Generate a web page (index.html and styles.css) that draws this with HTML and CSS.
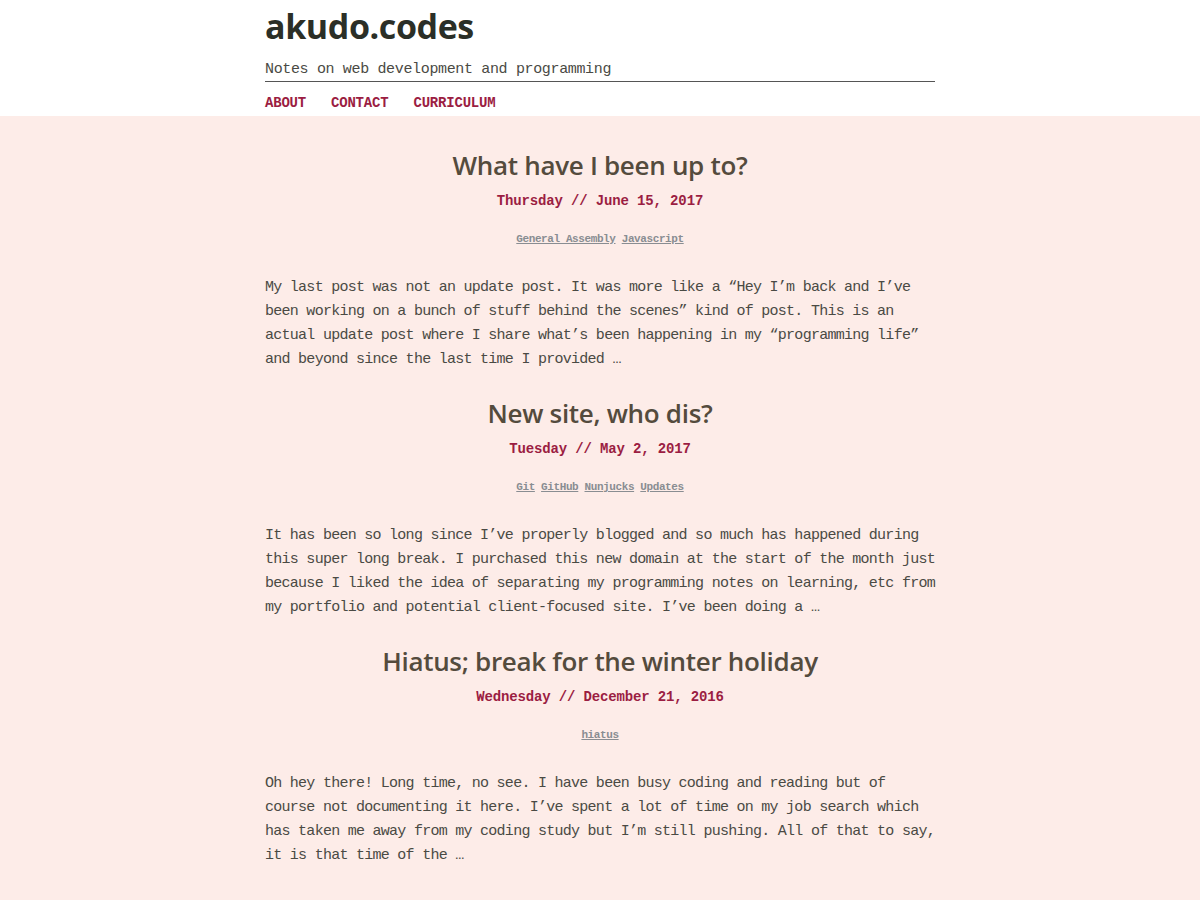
FILE: index.html
```html
<!DOCTYPE html>
<html lang="en">
<head>
<meta charset="utf-8">
<title>akudo.codes</title>
<link rel="stylesheet" href="styles.css">
</head>
<body>
<header class="site-header">
  <div class="wrap">
    <h1 class="site-title">akudo.codes</h1>
    <p class="tagline">Notes on web development and programming</p>
    <nav class="nav">
      <a href="#">ABOUT</a>
      <a href="#">CONTACT</a>
      <a href="#">CURRICULUM</a>
    </nav>
  </div>
</header>
<main class="content">
  <div class="wrap">
    <article class="post">
      <h2 class="post-title">What have I been up to?</h2>
      <p class="post-date">Thursday // June 15, 2017</p>
      <p class="tags"><a href="#">General Assembly</a> <a href="#">Javascript</a></p>
      <p class="excerpt">My last post was not an update post. It was more like a “Hey I’m back and I’ve been working on a bunch of stuff behind the scenes” kind of post. This is an actual update post where I share what’s been happening in my “programming life” and beyond since the last time I provided …</p>
    </article>
    <article class="post">
      <h2 class="post-title">New site, who dis?</h2>
      <p class="post-date">Tuesday // May 2, 2017</p>
      <p class="tags"><a href="#">Git</a> <a href="#">GitHub</a> <a href="#">Nunjucks</a> <a href="#">Updates</a></p>
      <p class="excerpt">It has been so long since I’ve properly blogged and so much has happened during this super long break. I purchased this new domain at the start of the month just because I liked the idea of separating my programming notes on learning, etc from my portfolio and potential client-focused site. I’ve been doing a …</p>
    </article>
    <article class="post">
      <h2 class="post-title">Hiatus; break for the winter holiday</h2>
      <p class="post-date">Wednesday // December 21, 2016</p>
      <p class="tags"><a href="#">hiatus</a></p>
      <p class="excerpt">Oh hey there! Long time, no see. I have been busy coding and reading but of course not documenting it here. I’ve spent a lot of time on my job search which has taken me away from my coding study but I’m still pushing. All of that to say, it is that time of the …</p>
    </article>
  </div>
</main>
</body>
</html>
```
FILE: styles.css
```css
html, body {
  margin: 0;
  padding: 0;
}
body {
  background: #fdece8;
  font-family: "Liberation Mono", "DejaVu Sans Mono", monospace;
  color: #4a4a44;
}
.wrap {
  width: 670px;
  margin: 0 auto;
}
.site-header {
  background: #ffffff;
  padding-top: 4px;
}
.site-title {
  margin: 0;
  font-family: "Open Sans", "Noto Sans", sans-serif;
  font-weight: 700;
  font-size: 34px;
  line-height: 44px;
  color: #2b2f27;
  letter-spacing: -0.4px;
}
.tagline {
  margin: 11px 0 0;
  font-size: 15px;
  letter-spacing: -0.35px;
  line-height: 22px;
  color: #4a4a44;
  border-bottom: 1px solid #555555;
  padding-bottom: 0;
}
.nav {
  display: flex;
  gap: 25px;
  padding: 11px 0 3px;
}
.nav a {
  font-size: 14px;
  font-weight: bold;
  letter-spacing: -0.2px;
  line-height: 20px;
  color: #9b1d42;
  text-decoration: none;
}
.content {
  padding-top: 31px;
}
.post {
  margin-bottom: 23px;
}
.post-title {
  margin: 0;
  text-align: center;
  font-family: "Open Sans", "Noto Sans", sans-serif;
  font-weight: 600;
  font-size: 26px;
  line-height: 36px;
  color: #544b3d;
  letter-spacing: -0.3px;
}
.post-date {
  margin: 2px 0 0;
  text-align: center;
  font-weight: bold;
  font-size: 14px;
  letter-spacing: -0.15px;
  line-height: 32px;
  color: #9b1d42;
}
.tags {
  margin: 14px 0 0;
  text-align: center;
  font-size: 11px;
  letter-spacing: -0.4px;
  line-height: 16px;
  font-weight: bold;
}
.tags a {
  color: #898d92;
  text-decoration: underline;
}
.excerpt {
  margin: 29px 0 0;
  font-size: 15px;
  letter-spacing: -0.73px;
  line-height: 24px;
  color: #4a4a44;
}
```
